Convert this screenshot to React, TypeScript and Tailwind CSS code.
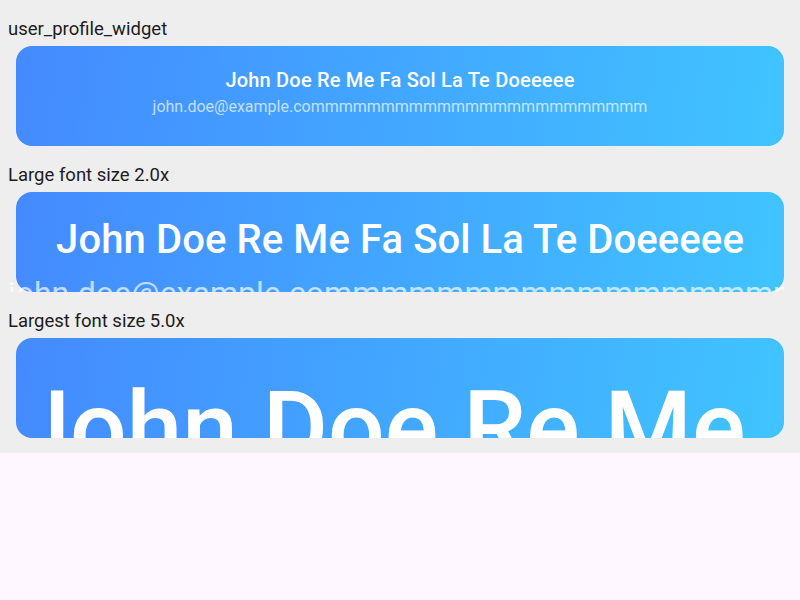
import React from "react";

const font = { fontFamily: "Roboto, 'Noto Sans', sans-serif" };

export default function App() {
  const name = "John Doe Re Me Fa Sol La Te Doeeeee";
  const email = "john.doe@example.co" + "mmmmmmmmmmmmmmmmmmmmmmmm";
  const card =
    "mx-4 mt-[5px] h-[100px] rounded-2xl overflow-y-clip flex flex-col items-center bg-[linear-gradient(97.4deg,#448AFF,#40C4FF)] text-white";
  const label = "pl-2 pt-[17px] text-[18.5px] leading-[24px] text-[#1d1b20]";
  return (
    <div className="min-h-screen bg-[#fef7ff]" style={font}>
      <div className="bg-[#eeeeee] pb-[15px] flex flex-col">
        <div className={label}>user_profile_widget</div>
        <div className={card + " pt-[22px] px-4"}>
          <div className="text-[20px] leading-[24px] font-medium tracking-[0.2px] text-center">{name}</div>
          <div className="mt-[5px] text-[16px] leading-[19px] text-white/70 text-center whitespace-nowrap">{email}</div>
        </div>

        <div className={label}>Large font size 2.0x</div>
        <div className={card + " pt-[24px] px-4"}>
          <div className="text-[40px] leading-[48px] font-medium tracking-[0.1px] text-center whitespace-nowrap">{name}</div>
          <div className="mt-[10px] ml-[-24px] mr-[-16px] self-stretch overflow-x-clip text-[32px] leading-[38px] text-white/70 text-left whitespace-nowrap">
            {email}
          </div>
        </div>

        <div className={label}>Largest font size 5.0x</div>
        <div className={card + " pt-[31px] px-0"}>
          <div className="-ml-[40px] text-[100px] leading-[118px] font-medium text-center">{name}</div>
        </div>
      </div>
    </div>
  );
}
